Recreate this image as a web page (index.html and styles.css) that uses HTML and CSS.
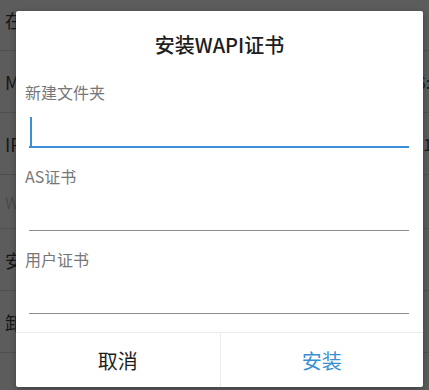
FILE: index.html
```html
<!DOCTYPE html>
<html lang="zh-CN">
<head>
  <meta charset="UTF-8">
  <meta name="viewport" content="width=device-width, initial-scale=1.0">
  <title>安装WAPI证书</title>
  <link rel="stylesheet" href="styles.css">
</head>
<body>
  <!-- 背景设置列表（被遮罩变暗） -->
  <div class="settings-list">
    <div class="setting-row first">
      <span class="setting-name">在休眠状态下保持WLAN连接</span>
    </div>
    <div class="setting-row">
      <span class="setting-name">MAC地址</span>
      <span class="setting-value">1c:77:f6:2a:90:3e</span>
    </div>
    <div class="setting-row">
      <span class="setting-name">IP地址</span>
      <span class="setting-value">192.168.1.105</span>
    </div>
    <div class="setting-row header">
      <span class="setting-name">WAPI</span>
    </div>
    <div class="setting-row">
      <span class="setting-name">安装WAPI证书</span>
    </div>
    <div class="setting-row">
      <span class="setting-name">卸载WAPI证书</span>
    </div>
  </div>

  <!-- 对话框 -->
  <div class="dialog">
    <p class="dialog-title">安装WAPI证书</p>

    <div class="field">
      <div class="field-label">新建文件夹</div>
      <div class="field-input focused">
        <span class="cursor"></span>
      </div>
    </div>

    <div class="field">
      <div class="field-label">AS证书</div>
      <div class="field-input"></div>
    </div>

    <div class="field">
      <div class="field-label">用户证书</div>
      <div class="field-input"></div>
    </div>

    <div class="dialog-buttons">
      <div class="dialog-button">取消</div>
      <div class="dialog-button primary">安装</div>
    </div>
  </div>
</body>
</html>
```

FILE: styles.css
```css
body {
  font-family: 'Noto Sans CJK SC', 'Noto Sans', sans-serif;
  margin: 0;
  padding: 0;
  background-color: #5c5c5c;
  overflow: hidden;
  height: 390px;
  position: relative;
}

/* 背景列表 */
.settings-list {
  display: flex;
  flex-direction: column;
}

.setting-row {
  height: 61px;
  border-bottom: 1px solid #4f4f4f;
  display: flex;
  align-items: center;
  justify-content: space-between;
  padding: 0 0 0 5px;
  font-size: 18px;
  color: #161616;
  white-space: nowrap;
  overflow: hidden;
}

.setting-row.first {
  margin-top: -11px;
}

.setting-row.header {
  height: 53px;
  color: #4a4a4a;
  font-size: 16px;
}

.setting-value {
  font-size: 16px;
  padding-left: 290px;
}

/* 对话框 */
.dialog {
  position: absolute;
  top: 11px;
  left: 16px;
  width: 407px;
  background-color: #fff;
  border-radius: 2px;
  box-shadow: 0 2px 6px rgba(0, 0, 0, 0.3);
  padding-top: 20px;
  box-sizing: border-box;
}

.dialog-title {
  margin: 0 0 22px;
  text-align: center;
  font-size: 20px;
  line-height: 28px;
  font-weight: 500;
  color: #1e1e1e;
}

.field {
  padding: 0 14px 0 9px;
  margin-bottom: 17px;
}

.field:nth-of-type(3) {
  margin-bottom: 18px;
}

.field-label {
  font-size: 16px;
  line-height: 22px;
  color: #777;
}

.field-input {
  height: 43px;
  margin-left: 4px;
  border-bottom: 1px solid #8c8c8c;
  display: flex;
  align-items: flex-end;
}

.field-input.focused {
  border-bottom: 2px solid #3a8fd6;
}

.cursor {
  width: 2px;
  height: 29px;
  margin-left: 1px;
  background-color: #3a8fd6;
}

.dialog-buttons {
  display: grid;
  grid-template-columns: 1fr 1fr;
  border-top: 1px solid #ececec;
}

.dialog-button {
  height: 54px;
  display: flex;
  justify-content: center;
  align-items: center;
  font-size: 20px;
  color: #1e1e1e;
}

.dialog-button + .dialog-button {
  border-left: 1px solid #ececec;
}

.dialog-button.primary {
  color: #3a8fd0;
}
```
